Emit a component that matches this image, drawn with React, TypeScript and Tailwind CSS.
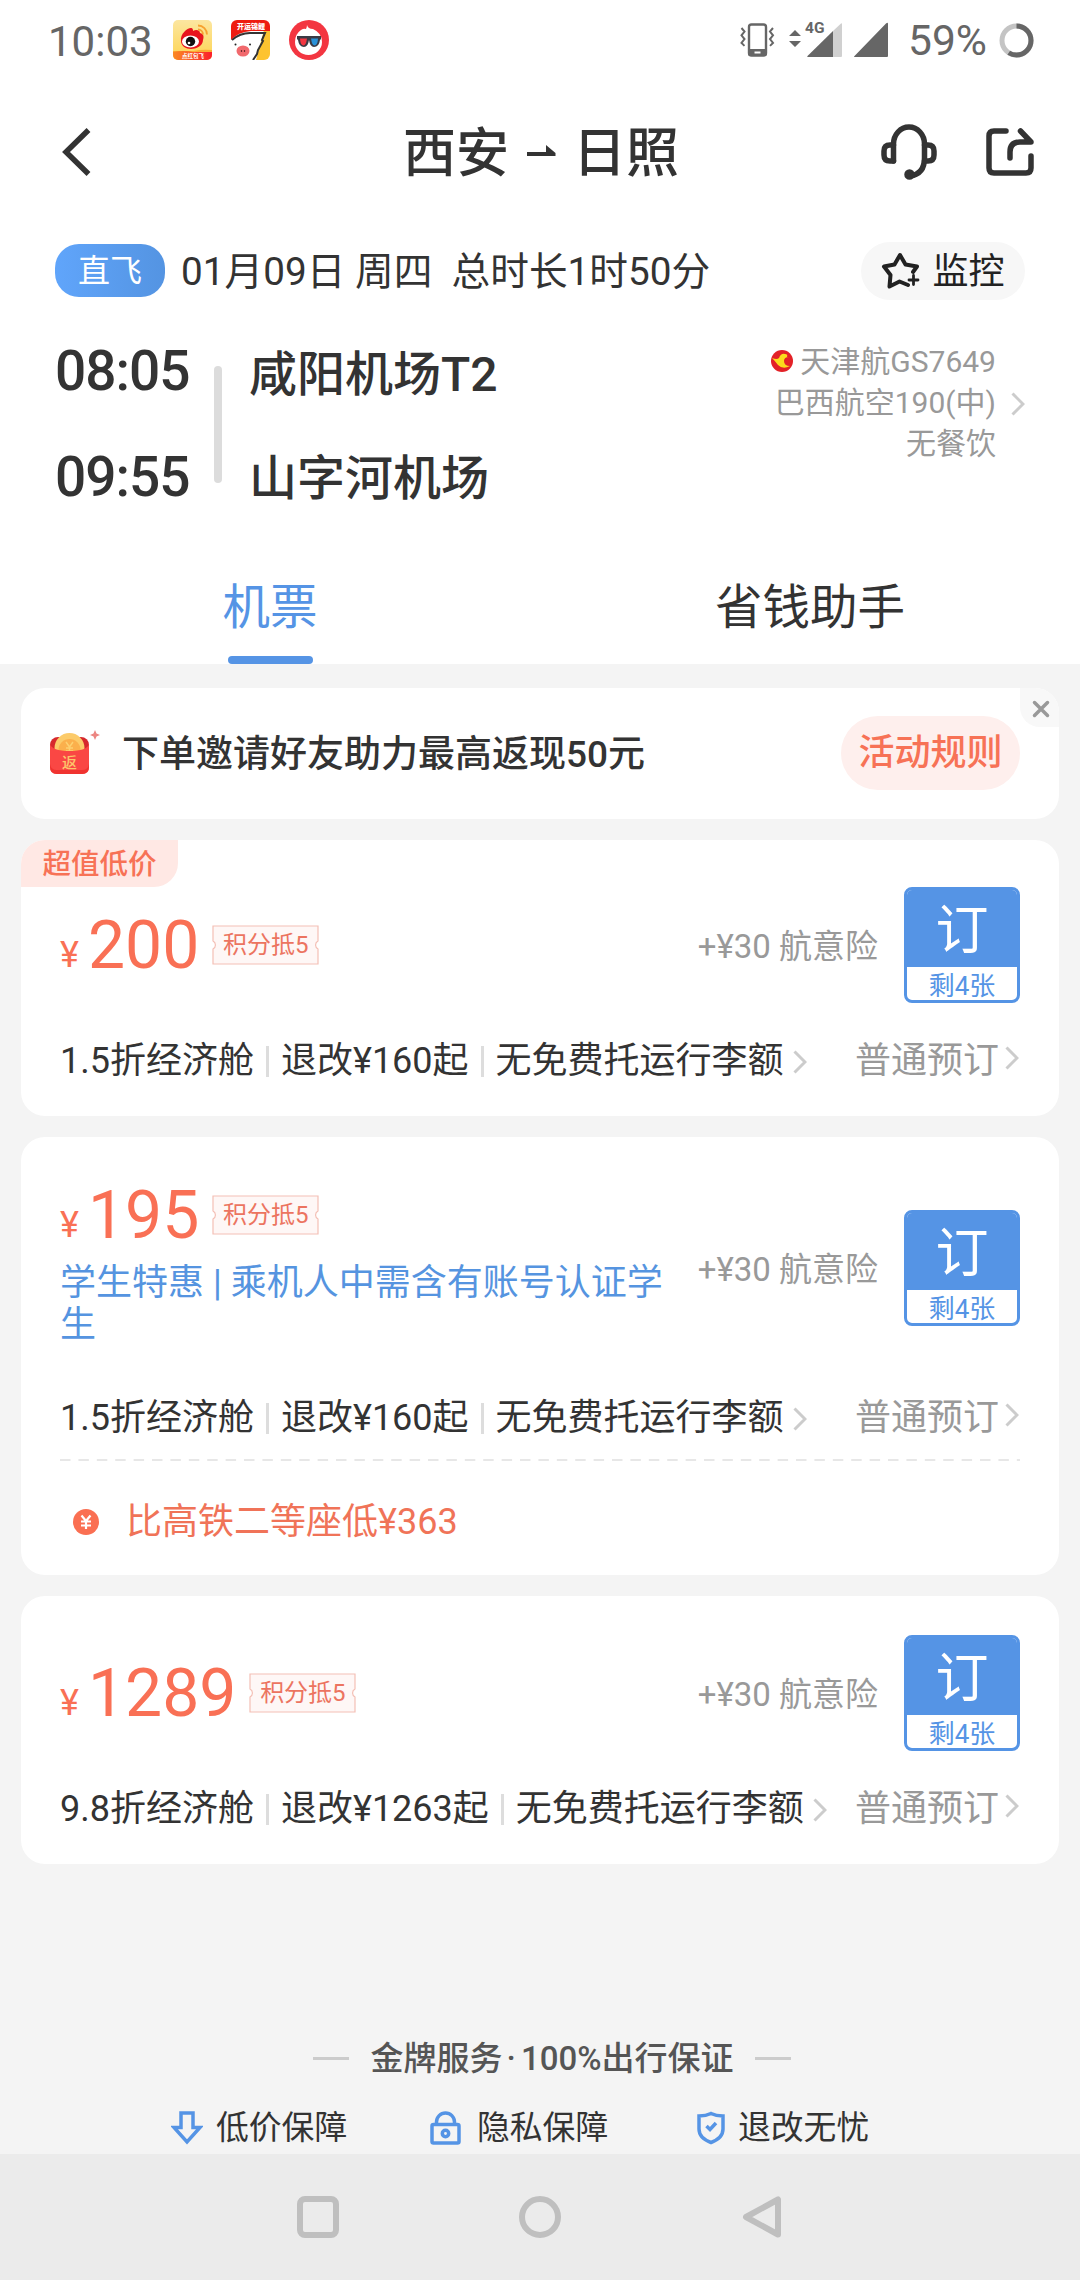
import React from 'react';

interface Fare {
  id: number;
  tag?: string;
  price: number;
  points: string;
  notice?: string;
  left: number;
  cabin: string;
  change: string;
  baggage: string;
  compare?: string;
}

const FARES: Fare[] = [
  { id: 1, tag: '超值低价', price: 200, points: '积分抵5', left: 4, cabin: '1.5折经济舱', change: '退改¥160起', baggage: '无免费托运行李额' },
  {
    id: 2,
    price: 195,
    points: '积分抵5',
    notice: '学生特惠 | 乘机人中需含有账号认证学生',
    left: 4,
    cabin: '1.5折经济舱',
    change: '退改¥160起',
    baggage: '无免费托运行李额',
    compare: '比高铁二等座低¥363',
  },
  { id: 3, price: 1289, points: '积分抵5', left: 4, cabin: '9.8折经济舱', change: '退改¥1263起', baggage: '无免费托运行李额' },
];

const Chevron: React.FC<{ className?: string }> = ({ className }) => (
  <svg className={`shrink-0 ${className || ''}`} width="14" height="24" viewBox="0 0 14 24" fill="none" stroke="#cccccc" strokeWidth="3">
    <path d="M1.5 1.5L12 12L1.5 22.5" />
  </svg>
);

const StatusBar: React.FC = () => (
  <div className="flex items-center h-20 pl-[48px] pr-[46px] text-[#666666]">
    <span className="pt-[3px] text-[42px] leading-[80px] w-[125px]">10:03</span>
    <svg width="39" height="40" viewBox="0 0 39 40">
      <defs>
        <linearGradient id="weiboBg" x1="0" y1="0" x2="0" y2="1">
          <stop offset="0" stopColor="#fce6a0" />
          <stop offset="1" stopColor="#fdd450" />
        </linearGradient>
        <linearGradient id="weiboBar" x1="0" y1="0" x2="1" y2="0">
          <stop offset="0" stopColor="#fb8a22" />
          <stop offset="1" stopColor="#fb1f2c" />
        </linearGradient>
      </defs>
      <rect width="39" height="40" rx="5" fill="url(#weiboBg)" />
      <path d="M0 31h39v4a5 5 0 0 1-5 5H5a5 5 0 0 1-5-5z" fill="url(#weiboBar)" />
      <path d="M0 31Q10 33 20 31T39 30V32H0z" fill="#fbab33" />
      <path d="M8 21C7 14 14 8 18 8c2 0 2 2 2 3 3-2 7-1 7 2 4 1 4 4 3 7 0 6-7 9-12 9C13 29 8 26 8 21z" fill="#e8141d" />
      <ellipse cx="17.500" cy="21.500" rx="8.500" ry="6" fill="#fff" />
      <circle cx="17.500" cy="21.500" r="4.700" fill="#111" />
      <circle cx="16" cy="23" r="1.300" fill="#fff" />
      <path d="M25 5.500a9 9 0 0 1 9 9M25 9.500a5 5 0 0 1 5 5" fill="none" stroke="#f7a130" strokeWidth="1.800" />
      <text x="20" y="37.500" textAnchor="middle" fontSize="5.500" fontWeight="700" fill="#fff">点红包飞</text>
    </svg>
    <svg className="ml-[19px]" width="39" height="40" viewBox="0 0 39 40">
      <clipPath id="pigClip"><rect width="39" height="40" rx="6" /></clipPath>
      <g clipPath="url(#pigClip)">
        <rect width="39" height="40" fill="#fff" />
        <path d="M33 10h6v30H25z" fill="#fdc32f" />
        <path d="M0 0h39v11H20Q7 12 0 20z" fill="#ee1c11" />
        <path d="M1 20Q9 13 19 13H34L31 20L32 21L27 30L26 34L22 40" fill="none" stroke="#333" strokeWidth="2" />
      </g>
      <ellipse cx="12" cy="31" rx="6.500" ry="5.500" fill="#f1696d" />
      <path d="M10.500 30v2M13.500 30v2" stroke="#702c2f" strokeWidth="1.200" />
      <circle cx="4.500" cy="24.500" r="1" fill="#222" />
      <circle cx="19" cy="24.500" r="1" fill="#222" />
      <text x="20" y="9" textAnchor="middle" fontSize="7" fontWeight="900" fill="#fff">开运锦鲤</text>
    </svg>
    <svg className="ml-[19px]" width="40" height="40" viewBox="0 0 40 40">
      <circle cx="20" cy="20" r="20" fill="#f33641" />
      <path d="M18 5q1 4 6 4q9 4 9 13a13.500 13 0 0 1-27 0q0-8 6-12q3-2 5-1q1-2 1-4z" fill="#fff" />
      <path d="M8 16h24v3l-1 1q-1 7-6 7q-4 0-5-7q-1 7-5 7q-5 0-6-7l-1-1z" fill="#3b3a44" />
      <path d="M11 18.500h7q-1 7-3.500 7-3 0-3.500-7z" fill="#f33641" />
      <path d="M22 18.500h7q-.5 7-3.500 7-2.500 0-3.500-7z" fill="#2a91d8" />
    </svg>
    <div className="flex items-center ml-auto">
      <svg width="35" height="34" viewBox="0 0 35 34" fill="none" stroke="#666666">
        <rect x="9" y="1.500" width="17" height="31" rx="2.500" strokeWidth="2.400" />
        <path d="M8 26h19v5q0 2-2 2H10q-2 0-2-2z" fill="#666666" stroke="none" />
        <path d="M14.500 28.500h6v2h-6z" fill="#fff" stroke="none" />
        <path d="M1.500 5l3 3.500l-3 3.800l3 3.800l-3 3.800l3 3M33 5l-3 3.500l3 3.800l-3 3.800l3 3.800l-3 3" strokeWidth="2" />
      </svg>
      <svg className="ml-[14px] mb-1" width="53" height="40" viewBox="0 -4 53 40" fill="#666666">
        <path d="M0 14L6 8L12 14zM0 19H12L6 25z" />
        <path d="M44 9L52 1.500Q53 1 53 2V34q0 1-1 1H44z" fill="#d0d0d0" />
        <path d="M44 9V35H19Q17.500 35 18.500 34z" />
        <text x="16" y="11" fontSize="15.500" fontWeight="700">4G</text>
      </svg>
      <svg className="ml-[12px]" width="34" height="36" viewBox="0 0 34 36" fill="#666666">
        <path d="M32 1.500Q34 0 34 2V34q0 1-1 1H1Q-.5 35 .5 34z" />
      </svg>
      <span className="ml-[20px] pt-[2px] text-[42.5px] leading-[80px]">59%</span>
      <svg className="ml-[12px]" width="35" height="35" viewBox="0 0 35 35" fill="none" strokeWidth="5">
        <circle cx="17.500" cy="17.500" r="14.500" stroke="#c4c4c4" />
        <circle cx="17.500" cy="17.500" r="14.500" stroke="#666666" pathLength="100" strokeDasharray="59 41" transform="rotate(-90 17.500 17.500)" />
      </svg>
    </div>
  </div>
);

const TitleBar: React.FC = () => (
  <div className="flex items-center h-[144px] pl-[62px] pr-[45px] text-[#333333]">
    <button className="w-[341px]">
      <svg width="30" height="48" viewBox="0 0 30 48" fill="none" stroke="currentColor" strokeWidth="5.500">
        <path d="M26.500 2L4 24L26.500 46" />
      </svg>
    </button>
    <h1 className="flex items-center pt-[3px] text-[53px] leading-[72px] font-medium">
      西安
      <svg className="ml-[18px] mr-[17px] mb-[6px]" width="29" height="12" viewBox="0 0 29 12" fill="currentColor">
        <path d="M0 7h19V0L28.500 8v3H0z" />
      </svg>
      日照
    </h1>
    <div className="flex items-center gap-[46px] ml-auto">
      <svg width="60" height="56" viewBox="0 0 60 56" fill="none" stroke="currentColor" strokeWidth="5.500" strokeLinecap="round" strokeLinejoin="round">
        <path d="M14.500 37V20a15.500 17 0 0 1 31 0V34Q45.500 50 31 52" />
        <path d="M14.500 21H11q-6 0-6 6v4q0 6 6 6h3.500M45.500 21H49q6 0 6 6v4q0 6-6 6h-3.500" />
        <circle cx="30.500" cy="50.500" r="2.500" fill="currentColor" />
      </svg>
      <svg width="50" height="50" viewBox="0 0 50 50" fill="none" stroke="currentColor" strokeWidth="5.500" strokeLinecap="round" strokeLinejoin="round">
        <path d="M21 4H9Q4 4 4 9V41q0 5 5 5H41q5 0 5-5V29" />
        <path d="M25 31V25q0-10 10-10H46L35.500 4" />
      </svg>
    </div>
  </div>
);

const FlightInfo: React.FC = () => (
  <div className="h-[322px] pl-[55px] pr-[55px] pt-[18px]">
    <div className="flex items-center h-[58px]">
      <span className="w-[110px] h-[53px] mb-[1px] rounded-3xl bg-linear-to-r from-[#60a5fb] to-[#5494e2] text-white text-[32px] leading-[55px] text-center">直飞</span>
      <span className="ml-[16px] pt-[3px] text-[38.7px] text-[#333333] whitespace-pre">01月09日 周四  总时长1时50分</span>
      <button className="flex items-center justify-center w-[164px] h-[58px] ml-auto rounded-full bg-[#f7f7f7] text-[#222222]">
        <svg width="39" height="38" viewBox="0 0 39 38" fill="none" stroke="currentColor" strokeWidth="4" strokeLinejoin="round" strokeLinecap="round">
          <path d="M27 33L18.500 29.500L8.500 34.500L9.500 23L3 14.500L13.500 12.500L19 3L24.500 12.500L36 14.500L32 20" />
          <path d="M32.500 23.500V32.500M28 28H37" strokeWidth="2.800" />
        </svg>
        <span className="ml-[12px] pt-[2px] text-[36px]">监控</span>
      </button>
    </div>
    <div className="flex pt-[21px] text-[#333333]">
      <div className="w-[159px] pt-[11px] text-[55px] leading-[106px] font-medium tracking-[-1px]">
        <p className="-mt-[14px]">08:05</p>
        <p>09:55</p>
      </div>
      <div className="w-2 h-[117px] mt-[45px] rounded bg-[#dcdcdc]"></div>
      <div className="ml-[27px] pt-[2px] text-[48px] leading-[104px] font-medium">
        <p>咸阳机场T2</p>
        <p>山字河机场</p>
      </div>
      <div className="flex items-center h-[124px] mt-[21px] ml-auto">
        <div className="mb-1 text-[30px] leading-[41px] text-right text-[#999999]">
          <p className="flex items-center justify-end">
            <svg className="mr-[7px]" width="22" height="22" viewBox="0 0 22 22">
              <circle cx="11" cy="11" r="11" fill="#e32127" />
              <path d="M1 8q5 2 7 0q2-5 6-4q3 0 2 3h2q-5 0-5 4q0 5 6 5q-7 4-12-1q-3-4-6-7z" fill="#fcdb1c" />
            </svg>
            天津航GS7649
          </p>
          <p>巴西航空190(中)</p>
          <p>无餐饮</p>
        </div>
        <Chevron className="ml-[15px]" />
      </div>
    </div>
  </div>
);

const Tabs: React.FC = () => (
  <div className="flex h-[118px] text-[47.5px] leading-[124px] text-center">
    <button className="flex flex-col items-center flex-1 text-[#5594e5]">
      <span className="h-[110px]">机票</span>
      <span className="w-[85px] h-2 rounded bg-[#5594e5]"></span>
    </button>
    <button className="flex flex-col items-center flex-1 text-[#333333]">
      <span className="h-[110px]">省钱助手</span>
    </button>
  </div>
);

const PromoBanner: React.FC = () => (
  <div className="relative flex items-center h-[131px] pl-[29px] pr-[39px] rounded-3xl bg-white overflow-hidden">
    <svg className="-mt-[2px]" width="52" height="46" viewBox="0 0 52 46">
      <rect y="7" width="39" height="24" rx="8" fill="#d6282d" />
      <circle cx="19.500" cy="18" r="15" fill="#fccb6a" />
      <circle cx="19.500" cy="20" r="11" fill="#fbb04c" />
      <path d="M16 12l3.500 5l3.500-5M19.500 17v6M16 18h7M16 21h7" stroke="#fdd070" strokeWidth="1.500" fill="none" />
      <path d="M0 14q2 7 19.500 7T39 14v23q0 7-7 7H7q-7 0-7-7z" fill="#fa4744" />
      <path d="M0 34v3q0 7 7 7h25q7 0 7-7v-3q-1 6-7 6H7q-6 0-7-6z" fill="#f03330" />
      <path d="M45 0l1.500 3.500L50 5l-3.500 1.500L45 10l-1.500-3.500L40 5l3.500-1.500z" fill="#ec8682" />
      <text x="19.500" y="38" textAnchor="middle" fontSize="15" fontWeight="500" fill="#fdc56a">返</text>
    </svg>
    <span className="ml-[20px] pt-[2px] text-[37px] font-medium text-[#333333]">下单邀请好友助力最高返现50元</span>
    <button className="w-[179px] h-[74px] mb-[1px] ml-auto rounded-full bg-[#feefed] text-[36px] leading-[75px] font-medium text-[#f77256]">活动规则</button>
    <button className="absolute top-0 right-0 flex items-center justify-center w-[39px] h-[39px] pt-[2px] pl-[2px] rounded-bl-[20px] bg-[#f8f8f8]">
      <svg width="18" height="18" viewBox="0 0 18 18" stroke="#999999" strokeWidth="3.500" strokeLinecap="round">
        <path d="M2.500 2.500l13 13M15.500 2.500l-13 13" />
      </svg>
    </button>
  </div>
);

const Voucher: React.FC<{ text: string }> = ({ text }) => (
  <span className="relative flex items-center justify-center w-[107px] h-[40px]">
    <svg className="absolute inset-0" width="107" height="40" viewBox="0 0 107 40" fill="#fef7f6" stroke="#f4bfb5" strokeWidth="1.200">
      <path d="M1 1H106V16a4.500 4.500 0 0 0 0 8V39H1V24a4.500 4.500 0 0 0 0-8z" />
    </svg>
    <span className="relative text-[24px] leading-[38px] text-[#ec7460]">{text}</span>
  </span>
);

const FareCard: React.FC<{ fare: Fare }> = ({ fare }) => (
  <div className="rounded-3xl bg-white overflow-hidden">
    {fare.tag ? (
      <div className="w-[157px] h-[47px] rounded-br-3xl bg-[#ffe8e4] text-[28.5px] leading-[49px] text-center font-medium text-[#f77256]">{fare.tag}</div>
    ) : (
      <div className="h-[39px]"></div>
    )}
    <div className="flex items-center pl-[39px] pr-[39px]">
      <div className="w-[612px]">
        <div className="flex items-center h-[78px] text-[#f97055]">
          <span className="w-[28px] pt-[19px] text-[36px]">¥</span>
          <span className="mr-[13px] pt-[2px] text-[66px] leading-[76px]">{fare.price}</span>
          <Voucher text={fare.points} />
        </div>
        {fare.notice && <p className="mt-[8px] mb-[14px] text-[36px] leading-[42px] text-[#5594e0]">{fare.notice}</p>}
      </div>
      <span className="ml-auto pt-[3px] text-[33px] text-[#999999]">+¥30 航意险</span>
      <button className="w-[116px] h-[116px] ml-[26px] rounded-lg border-[3px] border-[#5594e5] bg-white overflow-hidden">
        <span className="block h-[77px] bg-[#5594e5] text-[53px] leading-[83px] text-white">订</span>
        <span className="block text-[26px] leading-[38px] text-[#5594e5]">剩{fare.left}张</span>
      </button>
    </div>
    <div className="flex items-center h-[113px] pl-[39px] pr-[40px] text-[36px] text-[#333333]">
      <span className="pt-[3px]">{fare.cabin}</span>
      <span className="w-[3px] h-[31px] mx-[12px] mt-1 bg-[#dddddd]"></span>
      <span className="pt-[3px]">{fare.change}</span>
      <span className="w-[3px] h-[31px] mx-[12px] mt-1 bg-[#dddddd]"></span>
      <span className="pt-[3px]">{fare.baggage}</span>
      <Chevron className="ml-[9px] mt-[4px]" />
      <span className="ml-auto pt-[3px] text-[#999999]">普通预订</span>
      <Chevron className="ml-[6px] -mt-[3px]" />
    </div>
    {fare.compare && (
      <div className="px-[39px]">
        <svg className="block -mt-[14px]" width="960" height="2" viewBox="0 0 960 2">
          <path d="M0 1H960" stroke="#e0e0e0" strokeWidth="1.500" strokeDasharray="10.500 7.900" />
        </svg>
        <div className="flex items-center h-[114px] pt-[8px] pl-[13px] text-[36px] text-[#f07358]">
          <svg width="26" height="26" viewBox="0 0 26 26">
            <circle cx="13" cy="13" r="13" fill="#fa6f52" />
            <path d="M8.500 6.500L13 12L17.500 6.500M13 12V20M8 12.500H18M8 16.500H18" fill="none" stroke="#fff" strokeWidth="2.200" />
          </svg>
          <span className="ml-[27px]">{fare.compare}</span>
        </div>
      </div>
    )}
  </div>
);

const Guarantees: React.FC = () => (
  <div className="h-[120px]">
    <div className="flex items-center justify-center pl-6 gap-[22px] h-12 text-[33px] font-medium text-[#555555]">
      <span className="w-[36px] h-[3px] bg-[#cccccc]"></span>
      <p className="pt-[2px]">金牌服务<span className="ml-1 mr-[5px]">·</span>100%出行保证</p>
      <span className="w-[36px] h-[3px] bg-[#cccccc]"></span>
    </div>
    <div className="flex items-center h-12 mt-[22px] pl-[171px] text-[32.8px] text-[#333333]">
      <div className="flex items-center w-[258px]">
        <svg width="32" height="34" viewBox="0 0 32 34" fill="none" stroke="#5594e5" strokeWidth="3.500">
          <path d="M10 2H22V16.500H29L16 31L3 16.500H10z" />
        </svg>
        <span className="ml-[13px] pt-[1px]">低价保障</span>
      </div>
      <div className="flex items-center w-[267px]">
        <svg width="32" height="34" viewBox="0 0 32 34" fill="none" stroke="#5594e5" strokeWidth="3.500">
          <rect x="3" y="13.500" width="27" height="18.500" rx="1.500" />
          <path d="M7.500 13V11a9 9 0 0 1 18 0V13" />
          <circle cx="16.500" cy="22.500" r="3.200" />
        </svg>
        <span className="ml-[16px] pt-[1px]">隐私保障</span>
      </div>
      <div className="flex items-center">
        <svg width="30" height="34" viewBox="0 0 30 34" fill="none" stroke="#5594e5" strokeWidth="3.500">
          <path d="M15 2.500Q20 5 27 5V18Q27 27 15 31.500Q3 27 3 18V5Q10 5 15 2.500z" />
          <path d="M10.500 15L14 18.500L20 12" />
        </svg>
        <span className="ml-[12px] pt-[1px]">退改无忧</span>
      </div>
    </div>
  </div>
);

const NavBar: React.FC = () => (
  <div className="flex items-center justify-center gap-[180px] h-[126px] bg-[#ebebeb]">
    <svg width="42" height="42" viewBox="0 0 42 42" fill="none" stroke="#bfbfbf" strokeWidth="6">
      <rect x="3" y="3" width="36" height="36" rx="5" />
    </svg>
    <svg width="42" height="42" viewBox="0 0 42 42" fill="none" stroke="#bfbfbf" strokeWidth="6">
      <circle cx="21" cy="21" r="18" />
    </svg>
    <svg width="42" height="42" viewBox="0 0 42 42" fill="none" stroke="#bfbfbf" strokeWidth="6" strokeLinejoin="round">
      <path d="M37 3.500V38.500L5 21z" />
    </svg>
  </div>
);

const App: React.FC = () => {
  return (
    <div className="flex flex-col w-[1080px] h-[2280px] bg-[#f4f4f4] overflow-hidden font-[Roboto,'Noto_Sans_CJK_SC',sans-serif]">
      <div className="bg-white">
        <StatusBar />
        <TitleBar />
        <FlightInfo />
        <Tabs />
      </div>
      <div className="flex flex-col flex-1 gap-[21px] px-[21px] pt-6">
        <PromoBanner />
        {FARES.map(fare => <FareCard key={fare.id} fare={fare} />)}
      </div>
      <Guarantees />
      <NavBar />
    </div>
  );
};

export default App;
